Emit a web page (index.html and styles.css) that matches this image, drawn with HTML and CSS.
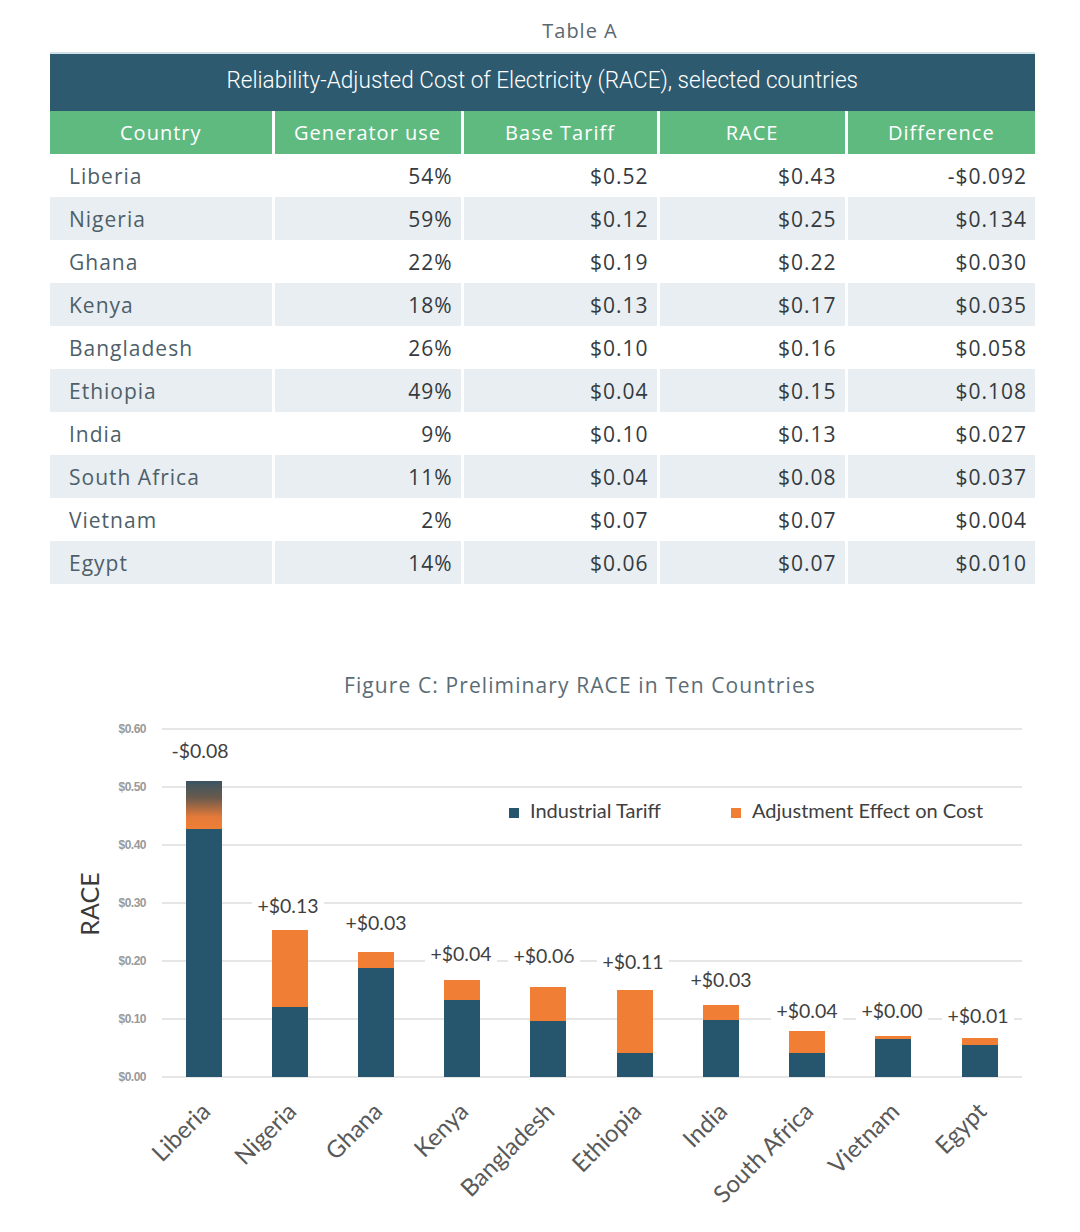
FILE: index.html
```html
<!DOCTYPE html>
<html>
<head>
<meta charset="utf-8">
<link rel="stylesheet" href="styles.css">
</head>
<body>
<div class="page">
  <div class="table-title">Table A</div>
  <table class="race">
    <colgroup>
      <col class="c1"><col class="c2"><col class="c3"><col class="c4"><col class="c5">
    </colgroup>
    <thead>
      <tr class="band"><th colspan="5"><span class="band-text">Reliability-Adjusted Cost of Electricity (RACE), selected countries</span></th></tr>
      <tr class="cols"><th>Country</th><th>Generator use</th><th>Base Tariff</th><th>RACE</th><th>Difference</th></tr>
    </thead>
    <tbody>
      <tr><td>Liberia</td><td>54%</td><td>$0.52</td><td>$0.43</td><td>-$0.092</td></tr>
      <tr><td>Nigeria</td><td>59%</td><td>$0.12</td><td>$0.25</td><td>$0.134</td></tr>
      <tr><td>Ghana</td><td>22%</td><td>$0.19</td><td>$0.22</td><td>$0.030</td></tr>
      <tr><td>Kenya</td><td>18%</td><td>$0.13</td><td>$0.17</td><td>$0.035</td></tr>
      <tr><td>Bangladesh</td><td>26%</td><td>$0.10</td><td>$0.16</td><td>$0.058</td></tr>
      <tr><td>Ethiopia</td><td>49%</td><td>$0.04</td><td>$0.15</td><td>$0.108</td></tr>
      <tr><td>India</td><td>9%</td><td>$0.10</td><td>$0.13</td><td>$0.027</td></tr>
      <tr><td>South Africa</td><td>11%</td><td>$0.04</td><td>$0.08</td><td>$0.037</td></tr>
      <tr><td>Vietnam</td><td>2%</td><td>$0.07</td><td>$0.07</td><td>$0.004</td></tr>
      <tr><td>Egypt</td><td>14%</td><td>$0.06</td><td>$0.07</td><td>$0.010</td></tr>
    </tbody>
  </table>

  <div class="fig-title">Figure C: Preliminary RACE in Ten Countries</div>

  <svg class="chart" width="1080" height="532" viewBox="0 700 1080 532" xmlns="http://www.w3.org/2000/svg">
    <defs>
      <linearGradient id="libgrad" x1="0" y1="0" x2="0" y2="1">
        <stop offset="0" stop-color="#3a5462"/>
        <stop offset="0.35" stop-color="#6a5a4c"/>
        <stop offset="0.75" stop-color="#e47a3a"/>
        <stop offset="1" stop-color="#f07f35"/>
      </linearGradient>
    </defs>
    <g class="grid">
      <line x1="162" y1="729" x2="1022" y2="729"/>
      <line x1="162" y1="787" x2="1022" y2="787"/>
      <line x1="162" y1="845" x2="1022" y2="845"/>
      <line x1="162" y1="903" x2="1022" y2="903"/>
      <line x1="162" y1="961" x2="1022" y2="961"/>
      <line x1="162" y1="1019" x2="1022" y2="1019"/>
      <line x1="162" y1="1077" x2="1022" y2="1077"/>
    </g>
    <g class="ylab">
      <text x="146" y="733">$0.60</text>
      <text x="146" y="791">$0.50</text>
      <text x="146" y="849">$0.40</text>
      <text x="146" y="907">$0.30</text>
      <text x="146" y="965">$0.20</text>
      <text x="146" y="1023">$0.10</text>
      <text x="146" y="1081">$0.00</text>
    </g>
    <text class="axis-title" transform="translate(99 904) rotate(-90)">RACE</text>

    <!-- legend -->
    <rect x="500" y="797" width="490" height="30" fill="#fff"/>
    <rect x="509" y="808" width="10" height="10" fill="#26566d"/>
    <text class="legend" x="530" y="818">Industrial Tariff</text>
    <rect x="731" y="808" width="10" height="10" fill="#f07f35"/>
    <text class="legend" x="752" y="818">Adjustment Effect on Cost</text>

    <!-- bars -->
    <g class="dark">
      <rect x="186" y="829" width="36" height="248"/>
      <rect x="272" y="1007" width="36" height="70"/>
      <rect x="358" y="968" width="36" height="109"/>
      <rect x="444" y="1000" width="36" height="77"/>
      <rect x="530" y="1021" width="36" height="56"/>
      <rect x="617" y="1053" width="36" height="24"/>
      <rect x="703" y="1020" width="36" height="57"/>
      <rect x="789" y="1053" width="36" height="24"/>
      <rect x="875" y="1039" width="36" height="38"/>
      <rect x="962" y="1045" width="36" height="32"/>
    </g>
    <rect x="186" y="781" width="36" height="48" fill="url(#libgrad)"/>
    <g class="orange">
      <rect x="272" y="930" width="36" height="77"/>
      <rect x="358" y="952" width="36" height="16"/>
      <rect x="444" y="980" width="36" height="20"/>
      <rect x="530" y="987" width="36" height="34"/>
      <rect x="617" y="990" width="36" height="63"/>
      <rect x="703" y="1005" width="36" height="15"/>
      <rect x="789" y="1031" width="36" height="22"/>
      <rect x="875" y="1036" width="36" height="3"/>
      <rect x="962" y="1038" width="36" height="7"/>
    </g>

    <!-- value labels -->
    <g class="vbg">
      <rect x="166" y="740" width="68" height="22"/>
      <rect x="252" y="895" width="72" height="22"/>
      <rect x="340" y="912" width="72" height="22"/>
      <rect x="425" y="943" width="72" height="22"/>
      <rect x="508" y="945" width="72" height="22"/>
      <rect x="597" y="951" width="72" height="22"/>
      <rect x="685" y="969" width="72" height="22"/>
      <rect x="771" y="1000" width="72" height="22"/>
      <rect x="856" y="1000" width="72" height="22"/>
      <rect x="942" y="1005" width="72" height="22"/>
    </g>
    <g class="val">
      <text x="200" y="758">-$0.08</text>
      <text x="288" y="913">+$0.13</text>
      <text x="376" y="930">+$0.03</text>
      <text x="461" y="961">+$0.04</text>
      <text x="544" y="963">+$0.06</text>
      <text x="633" y="969">+$0.11</text>
      <text x="721" y="987">+$0.03</text>
      <text x="807" y="1018">+$0.04</text>
      <text x="892" y="1018">+$0.00</text>
      <text x="978" y="1023">+$0.01</text>
    </g>

    <!-- category labels -->
    <g class="xlab">
      <text transform="translate(212 1113) rotate(-45)">Liberia</text>
      <text transform="translate(298 1113) rotate(-45)">Nigeria</text>
      <text transform="translate(384 1113) rotate(-45)">Ghana</text>
      <text transform="translate(470 1113) rotate(-45)">Kenya</text>
      <text transform="translate(556 1113) rotate(-45)">Bangladesh</text>
      <text transform="translate(643 1113) rotate(-45)">Ethiopia</text>
      <text transform="translate(729 1113) rotate(-45)">India</text>
      <text transform="translate(815 1113) rotate(-45)">South Africa</text>
      <text transform="translate(901 1113) rotate(-45)">Vietnam</text>
      <text transform="translate(988 1113) rotate(-45)">Egypt</text>
    </g>
  </svg>
</div>
</body>
</html>
```

FILE: styles.css
```css
* { box-sizing: border-box; }
html, body { margin: 0; padding: 0; background: #fff; }
body { font-family: "Open Sans", "DejaVu Sans", sans-serif; }

.page { width: 1080px; }

.table-title {
  margin: 19px 0 0 0;
  height: 33px;
  line-height: 24px;
  text-align: center;
  font-size: 20px;
  color: #5b6870;
  padding-left: 80px;
  letter-spacing: 1px;
}

.race {
  margin-left: 50px;
  width: 985px;
  table-layout: fixed;
  border-collapse: collapse;
}
.c1 { width: 223px; }
.c2 { width: 189px; }
.c3 { width: 196px; }
.c4 { width: 188px; }
.c5 { width: 189px; }

.band th {
  height: 58px;
  background: #2e5a6f;
  border-top: 2px solid #cfe2ea;
  color: #fff;
  font-weight: 400;
  padding: 0 0 4px 0;
  text-align: center;
}
.band-text {
  display: inline-block;
  font-family: Roboto, "Liberation Sans", sans-serif;
  font-size: 23px;
  font-weight: 300;
  transform: scaleX(0.98);
  white-space: nowrap;
  letter-spacing: 0;
}

.cols th {
  height: 43px;
  background: #5fba80;
  color: #fff;
  font-weight: 400;
  font-size: 20px;
  text-align: center;
  border-left: 3px solid #fff;
  letter-spacing: 1px;
  padding: 0;
}
.cols th:first-child { border-left: none; }

.race td {
  height: 43px;
  padding: 0 8px 0 0;
  font-size: 21px;
  color: #343a3e;
  text-align: right;
  border-left: 3px solid #fff;
  letter-spacing: 1px;
}
.race td:first-child {
  border-left: none;
  text-align: left;
  padding-left: 19px;
  color: #4e5f69;
}
.race tbody tr:nth-child(even) td { background: #e8eef1; }

.fig-title {
  margin-top: 88px;
  height: 28px;
  line-height: 26px;
  text-align: center;
  font-size: 21px;
  color: #5b6c75;
  padding-left: 80px;
  letter-spacing: 1.1px;
}

.chart { display: block; }
.grid line { stroke: #dedede; stroke-width: 1.5; }
.ylab text {
  font-family: "Liberation Sans", sans-serif;
  font-size: 12px;
  font-weight: 700;
  fill: #9a9a9a;
  text-anchor: end;
  letter-spacing: -0.5px;
}
.axis-title {
  font-family: Lato, "Open Sans", sans-serif;
  font-size: 25px;
  fill: #3a3a3a;
  text-anchor: middle;
}
.legend {
  font-family: Lato, "Open Sans", sans-serif;
  font-size: 20px;
  fill: #404040;
}
.dark rect { fill: #26566d; }
.orange rect { fill: #f07f35; }
.vbg rect { fill: #fff; }
.val text {
  font-family: Lato, "Open Sans", sans-serif;
  font-size: 19.5px;
  fill: #3f3f3f;
  text-anchor: middle;
}
.xlab text {
  font-family: Lato, "Open Sans", sans-serif;
  font-size: 24px;
  fill: #595959;
  text-anchor: end;
}
```
